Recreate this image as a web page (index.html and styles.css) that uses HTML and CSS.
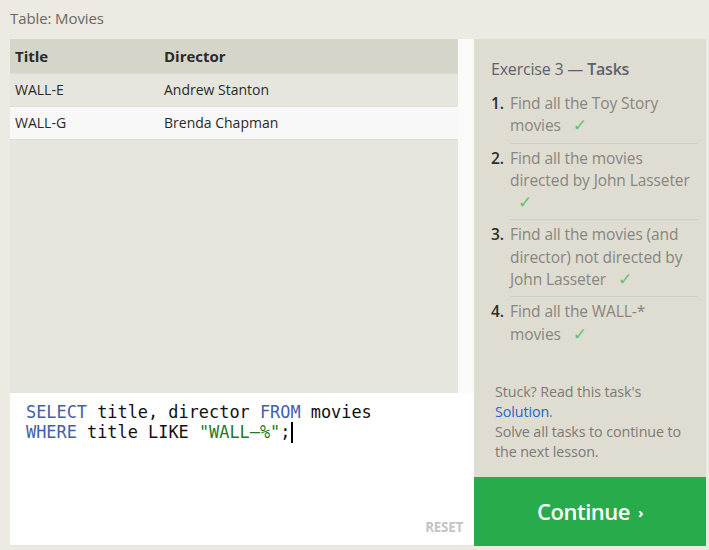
FILE: index.html
```html
<!DOCTYPE html>
<html>
<head>
<meta charset="utf-8">
<link rel="stylesheet" href="styles.css">
</head>
<body>
<div class="page">
  <div class="caption">Table: Movies</div>
  <div class="main">
    <div class="left">
      <div class="tablewrap">
        <div class="tablearea">
          <table class="results">
            <thead><tr><th class="c1">Title</th><th>Director</th></tr></thead>
            <tbody>
              <tr class="odd"><td class="c1">WALL-E</td><td>Andrew Stanton</td></tr>
              <tr class="even"><td class="c1">WALL-G</td><td>Brenda Chapman</td></tr>
            </tbody>
          </table>
        </div>
        <div class="scrollstrip"></div>
      </div>
      <div class="editor">
        <div class="code"><span class="kw">SELECT</span> title, director <span class="kw">FROM</span> movies<br><span class="kw">WHERE</span> title LIKE <span class="str">"WALL–%"</span>;<span class="cursor"></span></div>
        <div class="reset">RESET</div>
      </div>
    </div>
    <div class="right">
      <div class="tasks">
        <h2 class="title">Exercise 3 — <b>Tasks</b></h2>
        <ol class="list">
          <li><span class="num">1.</span><span class="txt">Find all the Toy Story movies <span class="check">✓</span></span></li>
          <li><span class="num">2.</span><span class="txt">Find all the movies directed by John Lasseter <span class="check">✓</span></span></li>
          <li><span class="num">3.</span><span class="txt">Find all the movies (and director) not directed by John Lasseter <span class="check">✓</span></span></li>
          <li><span class="num">4.</span><span class="txt">Find all the WALL-* movies <span class="check">✓</span></span></li>
        </ol>
        <div class="help">Stuck? Read this task's<br><a class="sol">Solution</a>.<br>Solve all tasks to continue to the next lesson.</div>
      </div>
      <div class="continue">Continue <span class="arrow">›</span></div>
    </div>
  </div>
</div>
</body>
</html>
```
FILE: styles.css
```css
* { box-sizing: border-box; }
html, body { margin: 0; padding: 0; }
body {
  background: #ede9e3;
  font-family: "Open Sans", "DejaVu Sans", sans-serif;
  width: 709px;
  height: 550px;
  overflow: hidden;
}
.page { padding: 0 3px 0 10px; }
.caption {
  height: 39px;
  padding-top: 8px;
  font-size: 15px;
  color: #6a6862;
  letter-spacing: -0.1px;
}
.main {
  display: flex;
  height: 507px;
}
.left {
  width: 464px;
  display: flex;
  flex-direction: column;
}
.tablewrap {
  display: flex;
  height: 354px;
}
.tablearea {
  width: 448px;
  background: #e7e6de;
}
.scrollstrip {
  width: 16px;
  background: #fafaf8;
}
.results {
  width: 100%;
  border-collapse: collapse;
  font-size: 14px;
  color: #2a2a2a;
}
.results th {
  text-align: left;
  height: 34px;
  background: #d6d5ca;
  font-weight: 700;
  font-size: 15px;
  padding: 0 0 0 5px;
  border-bottom: 1px solid #dedcd4;
}
.results td {
  height: 33px;
  padding: 0 0 1px 5px;
  border-bottom: 1px solid #dddcd6;
}
.results .c1 { width: 149px; }
.results tr.odd td { background: #e7e6de; }
.results tr.even td { background: #f8f8f8; }
.editor {
  flex: 1;
  background: #ffffff;
  position: relative;
  padding: 9px 16px;
  border-bottom: 1px solid #e5e3dc;
}
.code {
  font-family: "DejaVu Sans Mono", monospace;
  font-size: 16.9px;
  line-height: 20px;
  color: #111;
}
.kw { color: #4460a8; }
.str { color: #1d7a2a; }
.cursor {
  display: inline-block;
  width: 2px;
  height: 21px;
  background: #000;
  vertical-align: -5px;
  margin-left: 1px;
}
.reset {
  position: absolute;
  right: 11px;
  bottom: 9px;
  font-size: 13.5px;
  font-weight: 700;
  color: #c4c4c4;
  letter-spacing: -0.3px;
}
.right {
  width: 232px;
  display: flex;
  flex-direction: column;
  background: #dfdcd1;
}
.tasks {
  flex: 1;
  padding: 19px 8px 0 17px;
}
.title {
  margin: 0 0 12px 0;
  font-size: 16px;
  font-weight: 400;
  color: #5b6172;
  letter-spacing: -0.2px;
}
.title b { font-weight: 600; }
.list {
  list-style: none;
  margin: 0;
  padding: 0;
}
.list li {
  display: flex;
  font-size: 15.5px;
  line-height: 22.3px;
  letter-spacing: -0.1px;
}
.num {
  width: 19px;
  color: #2c2c2c;
  font-weight: 600;
}
.txt {
  flex: 1;
  color: #878580;
  padding-bottom: 6px;
  margin-bottom: 3px;
  border-bottom: 1px solid #cfccc1;
}
.list li:last-child .txt { border-bottom: none; }
.check {
  display: inline-block;
  color: #5cc472;
  margin-left: 8px;
  font-size: 17px;
  line-height: 18px;
}
.help {
  margin-top: 28px;
  padding-left: 4px;
  font-size: 14.3px;
  line-height: 20px;
  color: #7c7a74;
  letter-spacing: -0.1px;
}
.sol { color: #2866cc; }
.continue {
  height: 69px;
  background: #28ac4b;
  color: #fff;
  font-size: 22px;
  font-weight: 600;
  display: flex;
  align-items: center;
  justify-content: center;
  padding-bottom: 2px;
  letter-spacing: -0.5px;
}
.arrow {
  font-size: 15px;
  margin-left: 8px;
  margin-top: 3px;
  font-weight: 700;
}
```
